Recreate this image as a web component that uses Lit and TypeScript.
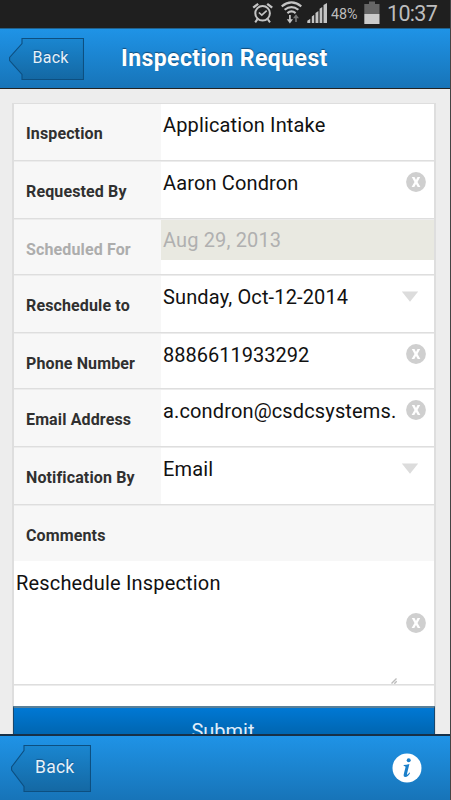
import { LitElement, html, css, svg, nothing } from "lit";
import { customElement, property } from "lit/decorators.js";

type Kind = "plain" | "clear" | "select" | "disabled";
interface Field { label: string; value: string; kind: Kind; size: number; }

const FIELDS: Field[] = [
  { label: "Inspection", value: "Application Intake", kind: "plain", size: 58 },
  { label: "Requested By", value: "Aaron Condron", kind: "clear", size: 58 },
  { label: "Scheduled For", value: "Aug 29, 2013", kind: "disabled", size: 56 },
  { label: "Reschedule to", value: "Sunday, Oct-12-2014", kind: "select", size: 58 },
  { label: "Phone Number", value: "8886611933292", kind: "clear", size: 56 },
  { label: "Email Address", value: "a.condron@csdcsystems.", kind: "clear", size: 58 },
  { label: "Notification By", value: "Email", kind: "select", size: 58 },
];

const clearIcon = html`<svg class="clear" width="20" height="20" viewBox="0 0 20 20">
  <circle cx="10" cy="10" r="9.9" fill="#cfcfcf"/>
  <path d="M5.8 4.9H8.5L10 7.9 11.5 4.9H14.2L11.5 9.9 14.4 15.1H11.7L10 12 8.3 15.1H5.6L8.5 9.9Z" fill="#fff"/>
</svg>`;

@customElement("status-bar")
export class StatusBar extends LitElement {
  static styles = css`
    :host { display: flex; box-sizing: border-box; height: 28px; background: #1f1f1f; color: #bdbdbd; }
    .icons { display: block; margin-left: 250px; flex: none; }
    .pct { font-size: 14.3px; line-height: 28px; width: 33px; white-space: nowrap; flex: none; letter-spacing: 0; }
    .time { font-size: 21.5px; line-height: 27px; margin-left: 7px; white-space: nowrap; letter-spacing: -0.7px; }
  `;
  render() {
    return html`
      <svg class="icons" width="81" height="28" viewBox="250 0 81 28" fill="none" stroke="#c4c4c4">
        <circle cx="262.6" cy="13.3" r="7.3" stroke-width="2"/>
        <path d="M258.9 12.5 261.8 15.2 266.7 10.7" stroke-width="1.7"/>
        <path d="M253.2 7.6 258.2 3.9M267.2 3.9 272.2 7.6" stroke-width="2.4"/>
        <path d="M257.5 19.2 255.2 22.4M267.8 19.2 270 22.4" stroke-width="2"/>
        <path d="M281.7 6.3Q291.5-1.4 301.3 6.3M284.6 9.8Q291.5 4.3 298.4 9.8M287.4 13.1Q291.5 9.7 295.6 13.1" stroke-width="2.1"/>
        <path d="M289.9 15V20" stroke-width="1.8"/>
        <path d="M286.8 19.2H293L289.9 23.6Z" fill="#c4c4c4" stroke="none"/>
        <path d="M296 22V17" stroke="#777" stroke-width="1.6"/>
        <path d="M293 18.3H299L296 14.2Z" fill="#777" stroke="none"/>
        <path d="M307.3 23V20.7L310.3 18.8V23ZM311.8 23V16.6L314.2 14.8V23ZM315.5 23V13L318.4 11V23ZM319.6 23V8.7L322.3 7V23ZM323.5 23V5L327 3V23Z" fill="#c4c4c4" stroke="none"/>
      </svg>
      <span class="pct">48%</span>
      <svg width="16" height="28" viewBox="364 0 16 28">
        <path d="M364.3 4H369V1.5H375V4H379.5V14H364.3Z" fill="#666"/>
        <path d="M364.3 14H379.5V24H364.3Z" fill="#cbcbcb"/>
      </svg>
      <span class="time">10:37</span>`;
  }
}

@customElement("back-button")
export class BackButton extends LitElement {
  @property({ type: Boolean }) large = false;
  static styles = css`
    :host { display: grid; }
    .shape, .text { grid-area: 1 / 1; }
    .text { color: #e6f1fa; font-size: 16px; line-height: 39px; padding-left: 24px; letter-spacing: 0.25px; text-shadow: 0 -1px 1px #14588f; }
    .large { font-size: 17.5px; line-height: 45px; }
  `;
  render() {
    const w = this.large ? 80 : 75;
    const h = this.large ? 47 : 42;
    const n = 13;
    const mid = h / 2;
    const outline = `M${n} .5H${w - 0.5}V${h - 0.5}H${n}V${h - 5.5}L.6 ${mid + 1.5}V${mid - 1.5}L${n} 5.5Z`;
    return html`
      <svg class="shape" width=${w} height=${h} viewBox="0 0 ${w} ${h}">
        ${svg`<defs><linearGradient id="fill" x1="0" y1="0" x2="0" y2="1">
          <stop offset="0" stop-color="#1a86d0"/><stop offset="1" stop-color="#1468a3"/>
        </linearGradient></defs>
        <path d=${outline} fill="url(#fill)" stroke="#0d4f80" stroke-width="1.1"/>`}
      </svg>
      <span class="text ${this.large ? "large" : ""}">Back</span>`;
  }
}

@customElement("form-row")
export class FormRow extends LitElement {
  @property({ attribute: false }) field!: Field;
  static styles = css`
    :host { display: flex; box-sizing: border-box; border-bottom: 1px solid #ececec; }
    .label, .value-cell { border-bottom: 1px solid #dedede; }
    .label { box-sizing: border-box; width: 147px; background: #f7f7f7; padding: 20px 0 0 12px; font-size: 16px; line-height: 19px; font-weight: 700; color: #303030; white-space: nowrap; letter-spacing: 0.13px; }
    .value-cell { flex: 1; }
    .value { box-sizing: border-box; height: 40px; display: flex; justify-content: space-between; padding: 9px 8px 0 2px; font-size: 20px; line-height: 25px; color: #111; white-space: nowrap; letter-spacing: 0.14px; }
    .label.disabled { color: #adadad; }
    .value.disabled { background: #e9e9e1; color: #b0b0b0; padding-top: 8px; }
    .clear { margin-top: 1.4px; flex: none; }
    .arrow { margin: 6px 7px 0 0; flex: none; }
    .digits { letter-spacing: 0; }
  `;
  render() {
    const { label, value, kind } = this.field;
    const off = kind === "disabled" ? "disabled" : "";
    const digits = /^\d+$/.test(value) ? "digits" : "";
    return html`
      <div class="label ${off}">${label}</div>
      <div class="value-cell">
        <div class="value ${off}">
          <span class=${digits}>${value}</span>
          ${kind === "clear" ? clearIcon : nothing}
          ${kind === "select" ? html`<svg class="arrow" width="18" height="11" viewBox="0 0 18 11"><path d="M.8.5H17.2L9 10.8Z" fill="#dcdcdc"/></svg>` : nothing}
        </div>
      </div>`;
  }
}

@customElement("app-root")
export class AppRoot extends LitElement {
  static styles = css`
    :host { display: flex; flex-direction: column; box-sizing: border-box; width: 451px; height: 800px; overflow: hidden; background: #ededed; border-right: 1px solid #444; font-family: Roboto, sans-serif; }
    status-bar { flex: none; margin-right: -1px; }
    header { flex: none; box-sizing: border-box; height: 61px; display: flex; border-top: 1px solid #20628f; border-bottom: 1px solid #222; background: linear-gradient(#1f93e6, #1774b8); }
    header back-button { margin: 9px 0 0 8.5px; height: 42px; width: 75px; }
    h1 { margin: 0 0 0 37.5px; font-size: 23px; line-height: 60px; font-weight: 700; color: #fff; white-space: nowrap; letter-spacing: 0.42px; text-shadow: 0 -1px 1px #134d7a; }
    main { flex: 1; min-height: 0; overflow: hidden; padding: 14px 14px 0 12px; }
    .form { border: 1px solid #dedede; border-left-width: 2px; border-bottom: 0; border-right-width: 2px; background: #fff; height: 700px; }
    .comments { box-sizing: border-box; height: 55px; background: #f7f7f7; padding: 20px 0 0 12px; font-size: 16px; line-height: 19px; font-weight: 700; color: #303030; letter-spacing: 0.13px; }
    .area { box-sizing: border-box; height: 125px; display: flex; justify-content: space-between; border-bottom: 1px solid #ececec; box-shadow: inset 0 -1px #dedede; padding: 10px 8px 0 2px; font-size: 20px; line-height: 25px; color: #111; letter-spacing: 0.17px; }
    .side { display: flex; width: 39px; flex-direction: column; align-items: flex-end; }
    .area .clear { margin-top: 42px; flex: none; }
    .grip { margin: 45px 29px 0 0; flex: none; }
    .submit { box-sizing: border-box; margin: 20px -1px 0; height: 50px; border: 1px solid #19476d; border-top: 2px solid #5b8098; padding-right: 2px; background: linear-gradient(#0078d4, #0063ab 30px); color: #e1eefa; font-size: 20px; line-height: 46px; text-align: center; }
    footer { flex: none; box-sizing: border-box; height: 66px; display: flex; justify-content: space-between; border-top: 2px solid #173047; background: linear-gradient(#1f93e6, #1774b8); padding: 9px 28px 0 11px; }
    footer back-button { height: 47px; width: 80px; }
    .info { margin-top: 8px; }
  `;
  render() {
    return html`
      <status-bar></status-bar>
      <header><back-button></back-button><h1>Inspection Request</h1></header>
      <main>
        <div class="form">
          ${FIELDS.map((f) => html`<form-row .field=${f} style="height:${f.size}px"></form-row>`)}
          <div class="comments">Comments</div>
          <div class="area">
            <span>Reschedule Inspection</span>
            <div class="side">
              ${clearIcon}
              <svg class="grip" width="6" height="6" viewBox="0 0 6 6"><path d="M.5 5.5 5.5.5M3.3 5.7 5.7 3.3" stroke="#bbb" stroke-width="1.4" fill="none"/></svg>
            </div>
          </div>
          <div class="submit">Submit</div>
        </div>
      </main>
      <footer>
        <back-button large></back-button>
        <svg class="info" width="30" height="30" viewBox="0 0 30 30">
          <circle cx="15" cy="15" r="14.5" fill="#fff"/>
          <circle cx="16.7" cy="7.3" r="2" fill="#1a7fc9"/>
          <path d="M11.7 12.1Q14.3 11.9 17.4 11L15.1 20.4Q14.7 22 15.5 21.6 16.4 21 17.3 19.5L18.1 20Q16 24 13.3 24 11.1 23.8 11.8 21L13.5 14.3Q13.8 13 11.7 13Z" fill="#1a7fc9"/>
        </svg>
      </footer>`;
  }
}
